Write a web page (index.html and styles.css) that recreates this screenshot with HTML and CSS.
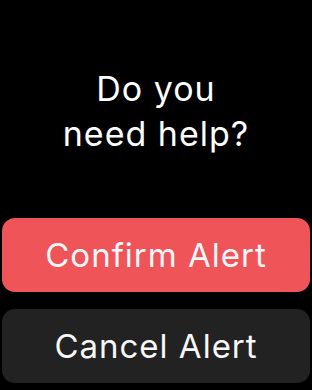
FILE: index.html
```html
<!DOCTYPE html>
<html>
<head>
<meta charset="utf-8">
<link rel="stylesheet" href="styles.css">
</head>
<body>
<div class="screen">
  <h1 class="title">Do you<br>need help?</h1>
  <div class="actions">
    <button class="btn btn-confirm">Confirm Alert</button>
    <button class="btn btn-cancel">Cancel Alert</button>
  </div>
</div>
</body>
</html>
```
FILE: styles.css
```css
html, body {
  margin: 0;
  padding: 0;
  background: #000;
}
.screen {
  width: 312px;
  height: 390px;
  display: flex;
  flex-direction: column;
  font-family: Inter, "Liberation Sans", sans-serif;
  color: #fff;
  overflow: hidden;
}
.title {
  margin: 0;
  padding-top: 66px;
  font-size: 34px;
  font-weight: 400;
  line-height: 45px;
  letter-spacing: 1px;
  text-align: center;
}
.actions {
  display: flex;
  flex-direction: column;
  gap: 17px;
  padding: 0 2px;
  margin-top: 62px;
}
.btn {
  height: 74px;
  border: none;
  border-radius: 13px;
  font-family: Inter, "Liberation Sans", sans-serif;
  font-size: 33px;
  letter-spacing: 1px;
  color: #f7f7f7;
  padding: 0;
}
.btn-confirm {
  background: #ef5459;
}
.btn-cancel {
  background: #222222;
}
```
